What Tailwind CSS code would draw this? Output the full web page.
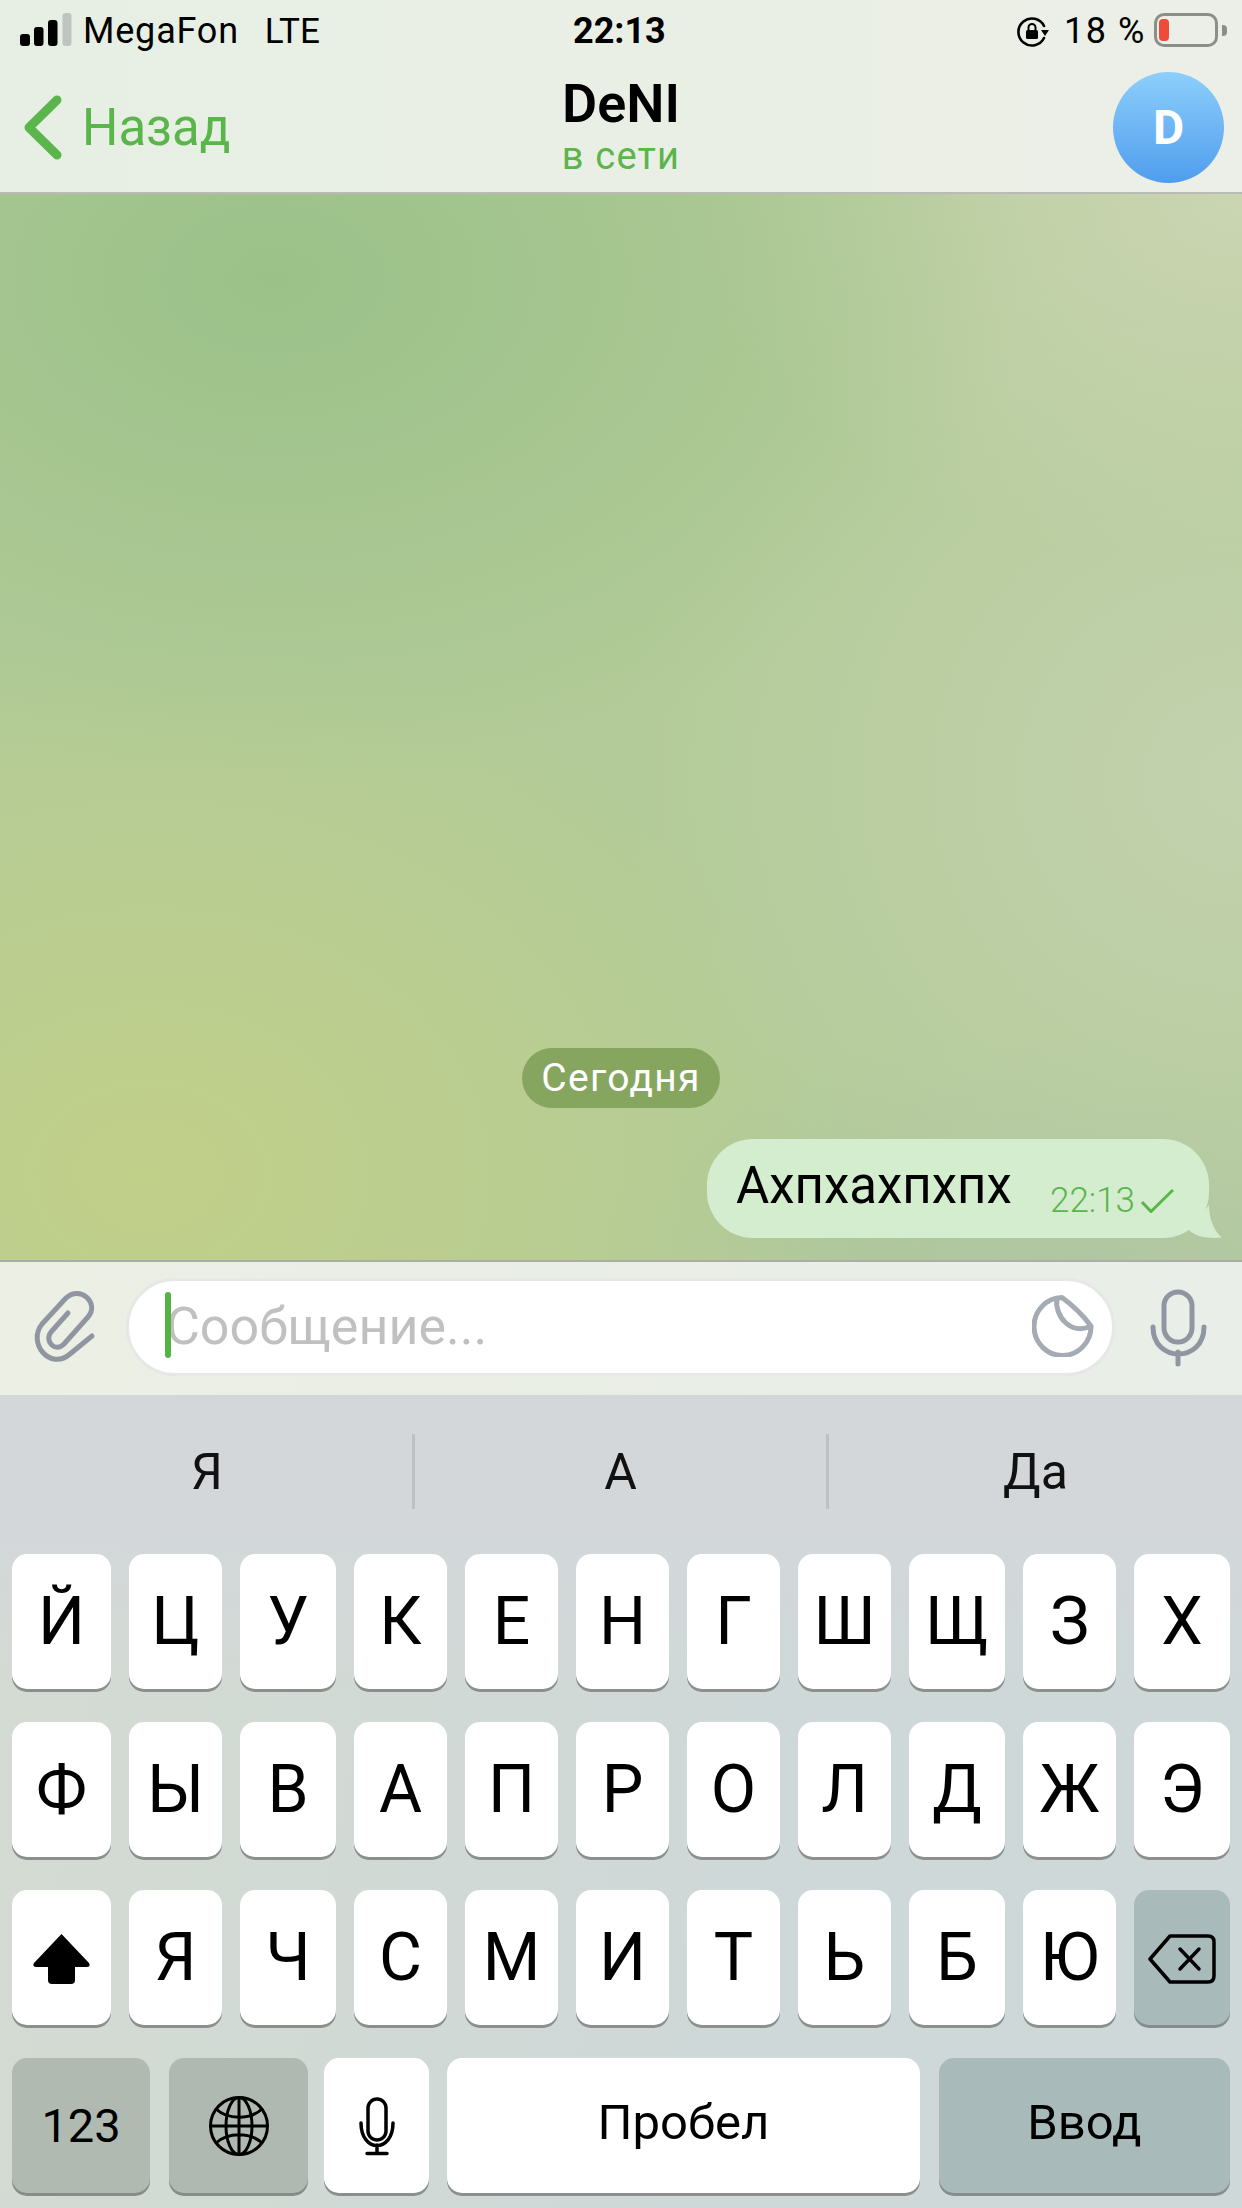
<!DOCTYPE html>
<html lang="ru">
<head>
    <meta charset="UTF-8">
    <meta name="viewport" content="width=device-width, initial-scale=1.0">
    <title>DeNI</title>
    <script src="https://cdn.jsdelivr.net/npm/@tailwindcss/browser@4"></script>
</head>
<body class="font-['Roboto',sans-serif] text-black">
<div class="w-[1242px] h-[2208px] overflow-hidden flex flex-col">

    <!-- status bar + nav -->
    <header class="h-[194px] shrink-0 bg-[#e9efe5] border-b-2 border-[#b9bcb5] bg-gradient-to-r from-[#e7efe4] to-[#ecefe7]">
        <div class="h-[62px] relative flex items-center text-[36px] leading-none">
            <svg class="ml-[20px] w-[52px] h-[33px] mt-[-3px]" viewBox="0 0 52 33">
                <rect x="0" y="21" width="10" height="12" rx="3"/>
                <rect x="14" y="14" width="9.5" height="19" rx="3"/>
                <rect x="28" y="7" width="9.5" height="26" rx="3"/>
                <rect x="42.5" y="0" width="9" height="33" rx="3" fill="#bfc4bf"/>
            </svg>
            <span class="ml-[11px] tracking-[0.8px]">MegaFon</span>
            <span class="ml-[26px] text-[35px]">LTE</span>
            <span class="absolute left-[573px] font-bold">22:13</span>
            <svg class="absolute left-[1016px] top-[17px] w-[33px] h-[30px]" viewBox="0 0 33 30" fill="none" stroke="#000" stroke-width="2.6">
                <path d="M28 9A13.5 13.5 0 1 0 28 21" stroke-linecap="round"/>
                <path d="M25 13h8l-4 6z" fill="#000" stroke="none"/>
                <rect x="10" y="13" width="12" height="9" rx="1.5" fill="#000" stroke="none"/>
                <path d="M12.5 13v-2.5a3.5 3.5 0 0 1 7 0V13" stroke-width="2"/>
            </svg>
            <span class="absolute left-[1064px] tracking-[1.5px]">18 %</span>
            <div class="absolute left-[1154px] top-[13px] w-[64px] h-[34px] rounded-[10px] border-[3px] border-[#8d8e89] pl-[2px] py-[3px]">
                <div class="w-[10px] h-full rounded-[4px] bg-[#ee4b38]"></div>
            </div>
            <div class="absolute left-[1222px] top-[25px] w-[5px] h-[11px] rounded-r-[4px] bg-[#8d8e89]"></div>
        </div>
        <div class="h-[130px] grid grid-cols-[1fr_auto_1fr]">
            <div class="flex items-start pl-[24px] pt-[33px] text-[#5ab54b]">
                <svg class="w-[38px] h-[65px]" viewBox="0 0 38 65" fill="none" stroke="#5ab54b" stroke-width="9" stroke-linecap="round" stroke-linejoin="round">
                    <path d="M33 5L5 32.500L33 60"/>
                </svg>
                <span class="ml-[20px] mt-[3px] text-[51px] leading-[60px]">Назад</span>
            </div>
            <div class="flex flex-col items-center">
                <span class="text-[54px] leading-[50px] font-semibold mt-[17px]">DeNI</span>
                <span class="text-[38px] leading-[40px] tracking-[1.2px] text-[#5ab54b] mt-[7px]">в сети</span>
            </div>
            <div class="flex justify-end pr-[18px] pt-[10px]">
                <div class="w-[111px] h-[111px] rounded-full bg-gradient-to-b from-[#8dcffb] to-[#4f9ded] flex items-center justify-center text-white text-[48px] font-bold">D</div>
            </div>
        </div>
    </header>

    <!-- chat -->
    <main class="h-[1066px] shrink-0 flex flex-col items-center justify-end pb-[22px] bg-[#b3cb98] bg-[radial-gradient(ellipse_60%_48%_at_22%_8%,#9bc189_0%,#9bc18900_100%),radial-gradient(ellipse_55%_50%_at_12%_92%,#c1d089_0%,#c1d08900_100%),radial-gradient(ellipse_45%_35%_at_100%_0%,#cbd5b2_0%,#cbd5b200_100%),radial-gradient(ellipse_50%_55%_at_100%_55%,#c3d2ae_0%,#c3d2ae00_100%),radial-gradient(ellipse_40%_22%_at_88%_100%,#adc4a0_0%,#adc4a000_100%)]">
        <div class="h-[60px] w-[198px] rounded-[30px] bg-[#86a660] text-white text-[39px] tracking-[1.3px] flex items-center justify-center">Сегодня</div>
        <div class="relative self-end mr-[33px] mt-[31px] w-[502px] h-[99px] rounded-[46px] bg-[#d4edcf] flex items-start pl-[29px]">
            <span class="text-[51px] leading-[60px] mt-[17px]">Ахпхахпхпх</span>
            <span class="absolute left-[343px] top-[47px] text-[35px] leading-[30px] font-light text-[#5ab54b]">22:13</span>
            <svg class="absolute left-[434px] top-[50px] w-[33px] h-[24px]" viewBox="0 0 33 24" fill="none" stroke="#5ab54b" stroke-width="3">
                <path d="M1 13L10 22.500L32 1"/>
            </svg>
            <svg class="absolute left-[473px] top-[66px] w-[44px] h-[34px]" viewBox="0 0 44 34" fill="#d4edcf">
                <path d="M29 0C29 14 34 26 42 32.500C32 33.500 16 33 9 25Z"/>
            </svg>
        </div>
    </main>

    <!-- composer -->
    <section class="h-[135px] shrink-0 border-t-2 border-[#a9ada6] bg-gradient-to-r from-[#ebefe4] to-[#e9eee8] relative flex items-start">
        <svg class="absolute left-[30px] top-[27px] w-[66px] h-[76px]" viewBox="30 38 66 76" fill="none" stroke="#8f96a2" stroke-width="5" stroke-linecap="round" stroke-linejoin="round">
            <path d="M68 62L51 81C44 90 55 102 64 93L88 66C100 52 80 34 66 47L42 73C27 92 50 120 70 103L92 85"/>
        </svg>
        <div class="ml-[126px] mt-[16px] w-[989px] h-[98px] rounded-[49px] bg-white border-[3px] border-[#e6e7e7] relative flex items-center">
            <div class="absolute left-[36px] top-[11px] w-[6px] h-[66px] rounded-[3px] bg-[#55b345]"></div>
            <span class="ml-[37px] text-[52px] text-[#c0c0c0]">Сообщение...</span>
            <svg class="absolute left-[903px] top-[14px] w-[62px] h-[62px]" viewBox="411 45 62 62" fill="none" stroke="#a5abb3" stroke-width="5" stroke-linejoin="round">
                <path d="M441 47.500A28.500 29 0 1 0 470 76Q458 60 441 47.500Z"/>
                <path d="M436 48C433 66 450 86 470 76"/>
            </svg>
        </div>
        <svg class="absolute left-[1149px] top-[27px] w-[60px] h-[80px]" viewBox="528 38 60 80" fill="none" stroke="#8f96a2" stroke-width="5" stroke-linecap="round">
            <rect x="543" y="41" width="28" height="50" rx="14"/>
            <path d="M532 76C532 112 583 112 583 76M557 101V113"/>
        </svg>
    </section>

    <!-- keyboard -->
    <section class="flex-1 bg-[linear-gradient(180deg,#d3d7da_0px,#d3d7da_130px,#d3d7da00_300px),linear-gradient(100deg,#d4dbd2_0%,#cfd8d8_60%)] relative">
        <div class="h-[135px] flex items-start text-[50px] leading-none text-[#111]">
            <div class="w-[412px] h-[135px] flex items-center justify-center pt-[18px] pl-[2px]">Я</div>
            <div class="w-[3px] h-[75px] mt-[39px] bg-[#bdc1c5]"></div>
            <div class="w-[411px] h-[135px] flex items-center justify-center pt-[18px]">А</div>
            <div class="w-[3px] h-[75px] mt-[39px] bg-[#bdc1c5]"></div>
            <div class="flex-1 h-[135px] flex items-center justify-center pt-[18px]">Да</div>
        </div>
        <div class="pt-[24px] grid grid-cols-[99px_93px_96px_93px_93px_93px_93px_93px_96px_93px_96px] gap-x-[18px] gap-y-[33px] pl-[12px] text-[66px] leading-none">
            <div class="h-[135px] rounded-[15px] bg-white shadow-[0_3px_0_#8b8f8d] flex items-center justify-center">Й</div>
            <div class="h-[135px] rounded-[15px] bg-white shadow-[0_3px_0_#8b8f8d] flex items-center justify-center">Ц</div>
            <div class="h-[135px] rounded-[15px] bg-white shadow-[0_3px_0_#8b8f8d] flex items-center justify-center">У</div>
            <div class="h-[135px] rounded-[15px] bg-white shadow-[0_3px_0_#8b8f8d] flex items-center justify-center">К</div>
            <div class="h-[135px] rounded-[15px] bg-white shadow-[0_3px_0_#8b8f8d] flex items-center justify-center">Е</div>
            <div class="h-[135px] rounded-[15px] bg-white shadow-[0_3px_0_#8b8f8d] flex items-center justify-center">Н</div>
            <div class="h-[135px] rounded-[15px] bg-white shadow-[0_3px_0_#8b8f8d] flex items-center justify-center">Г</div>
            <div class="h-[135px] rounded-[15px] bg-white shadow-[0_3px_0_#8b8f8d] flex items-center justify-center">Ш</div>
            <div class="h-[135px] rounded-[15px] bg-white shadow-[0_3px_0_#8b8f8d] flex items-center justify-center">Щ</div>
            <div class="h-[135px] rounded-[15px] bg-white shadow-[0_3px_0_#8b8f8d] flex items-center justify-center">З</div>
            <div class="h-[135px] rounded-[15px] bg-white shadow-[0_3px_0_#8b8f8d] flex items-center justify-center">Х</div>

            <div class="h-[135px] rounded-[15px] bg-white shadow-[0_3px_0_#8b8f8d] flex items-center justify-center">Ф</div>
            <div class="h-[135px] rounded-[15px] bg-white shadow-[0_3px_0_#8b8f8d] flex items-center justify-center">Ы</div>
            <div class="h-[135px] rounded-[15px] bg-white shadow-[0_3px_0_#8b8f8d] flex items-center justify-center">В</div>
            <div class="h-[135px] rounded-[15px] bg-white shadow-[0_3px_0_#8b8f8d] flex items-center justify-center">А</div>
            <div class="h-[135px] rounded-[15px] bg-white shadow-[0_3px_0_#8b8f8d] flex items-center justify-center">П</div>
            <div class="h-[135px] rounded-[15px] bg-white shadow-[0_3px_0_#8b8f8d] flex items-center justify-center">Р</div>
            <div class="h-[135px] rounded-[15px] bg-white shadow-[0_3px_0_#8b8f8d] flex items-center justify-center">О</div>
            <div class="h-[135px] rounded-[15px] bg-white shadow-[0_3px_0_#8b8f8d] flex items-center justify-center">Л</div>
            <div class="h-[135px] rounded-[15px] bg-white shadow-[0_3px_0_#8b8f8d] flex items-center justify-center">Д</div>
            <div class="h-[135px] rounded-[15px] bg-white shadow-[0_3px_0_#8b8f8d] flex items-center justify-center">Ж</div>
            <div class="h-[135px] rounded-[15px] bg-white shadow-[0_3px_0_#8b8f8d] flex items-center justify-center">Э</div>

            <div class="h-[135px] rounded-[15px] bg-white shadow-[0_3px_0_#8b8f8d] flex items-center justify-center">
                <svg class="w-[57px] h-[50px] mt-[3px]" viewBox="0 0 57 50"><path d="M28.500 0L56 29Q58 33 54 33H42V46Q42 50 38 50H19Q15 50 15 46V33H3Q-1 33 1 29Z"/></svg>
            </div>
            <div class="h-[135px] rounded-[15px] bg-white shadow-[0_3px_0_#8b8f8d] flex items-center justify-center">Я</div>
            <div class="h-[135px] rounded-[15px] bg-white shadow-[0_3px_0_#8b8f8d] flex items-center justify-center">Ч</div>
            <div class="h-[135px] rounded-[15px] bg-white shadow-[0_3px_0_#8b8f8d] flex items-center justify-center">С</div>
            <div class="h-[135px] rounded-[15px] bg-white shadow-[0_3px_0_#8b8f8d] flex items-center justify-center">М</div>
            <div class="h-[135px] rounded-[15px] bg-white shadow-[0_3px_0_#8b8f8d] flex items-center justify-center">И</div>
            <div class="h-[135px] rounded-[15px] bg-white shadow-[0_3px_0_#8b8f8d] flex items-center justify-center">Т</div>
            <div class="h-[135px] rounded-[15px] bg-white shadow-[0_3px_0_#8b8f8d] flex items-center justify-center">Ь</div>
            <div class="h-[135px] rounded-[15px] bg-white shadow-[0_3px_0_#8b8f8d] flex items-center justify-center">Б</div>
            <div class="h-[135px] rounded-[15px] bg-white shadow-[0_3px_0_#8b8f8d] flex items-center justify-center">Ю</div>
            <div class="h-[135px] rounded-[15px] bg-[#a9baba] shadow-[0_3px_0_#858d8d] flex items-center justify-center">
                <svg class="w-[68px] h-[50px] mt-[3px]" viewBox="0 0 68 50" fill="none" stroke="#000" stroke-width="3.500" stroke-linecap="round" stroke-linejoin="round">
                    <path d="M22 2H60Q66 2 66 8V42Q66 48 60 48H22L2 25Z"/>
                    <path d="M32 15L51 35M51 15L32 35"/>
                </svg>
            </div>
        </div>
        <div class="mt-[33px] pl-[12px] flex text-[49px] leading-none">
            <div class="w-[138px] h-[135px] rounded-[15px] bg-[#b0bab1] shadow-[0_3px_0_#858d86] flex items-center justify-center text-[47px]">123</div>
            <div class="ml-[19px] w-[139px] h-[135px] rounded-[15px] bg-[#afb9b1] shadow-[0_3px_0_#858d86] flex items-center justify-center">
                <svg class="w-[62px] h-[62px]" viewBox="0 0 62 62" fill="none" stroke="#000" stroke-width="3">
                    <circle cx="31" cy="31" r="28.500"/>
                    <ellipse cx="31" cy="31" rx="13" ry="28.500"/>
                    <path d="M31 3V59M3 31H59M8 14C20 25 42 25 54 14M8 48C20 37 42 37 54 48"/>
                </svg>
            </div>
            <div class="ml-[16px] w-[105px] h-[135px] rounded-[15px] bg-white shadow-[0_3px_0_#8b8f8d] flex items-center justify-center">
                <svg class="w-[38px] h-[60px]" viewBox="358 227 38 60" fill="none" stroke="#000" stroke-width="3.500" stroke-linecap="round">
                    <rect x="368" y="230" width="18" height="41" rx="9"/>
                    <path d="M361 254C361 284 393 284 393 254M377 276V284M367 284.500H387"/>
                </svg>
            </div>
            <div class="ml-[18px] w-[473px] h-[135px] rounded-[15px] bg-white shadow-[0_3px_0_#8b8f8d] flex items-center justify-center pb-[6px]">Пробел</div>
            <div class="ml-[19px] w-[291px] h-[135px] rounded-[15px] bg-[#a9baba] shadow-[0_3px_0_#858d8d] flex items-center justify-center pb-[6px]">Ввод</div>
        </div>
    </section>
</div>
</body>
</html>
